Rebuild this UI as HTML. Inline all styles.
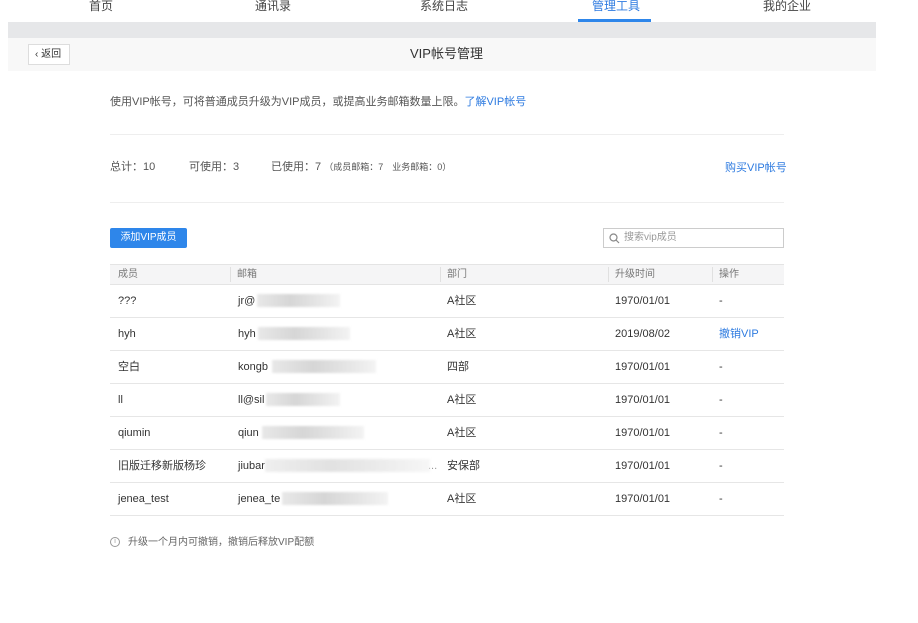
<!DOCTYPE html>
<html><head><meta charset="utf-8"><style>
*{margin:0;padding:0;box-sizing:border-box}
body{width:918px;height:623px;background:#fff;font-family:"Liberation Sans","Noto Sans CJK SC",sans-serif;font-size:11px;line-height:13px;color:#333;position:relative;overflow:hidden}
.a{position:absolute;white-space:nowrap;line-height:13px}
.nav{font-size:12px;color:#444;top:0;line-height:13px}
.blue{color:#2e7be0}
.g{color:#555}
.bl{position:absolute;height:13px;background:linear-gradient(90deg,#e8e8e8,#d6d6d6 40%,#e4e4e4 70%,#f3f3f3);filter:blur(1px)}
.row{position:absolute;left:110px;width:674px;height:33px;border-bottom:1px solid #e6e6e6}
.row span{position:absolute;top:10px;font-size:11px;line-height:13px;height:13px;color:#333;white-space:nowrap}
</style></head><body>
<div class="a nav" style="left:89px">首页</div>
<div class="a nav" style="left:255px">通讯录</div>
<div class="a nav" style="left:420px">系统日志</div>
<div class="a nav blue" style="left:592px">管理工具</div>
<div class="a nav" style="left:763px">我的企业</div>
<div class="a" style="left:578px;top:19px;width:73px;height:3px;background:#2e86ea"></div>
<div class="a" style="left:8px;top:22px;width:868px;height:16px;background:#e6e7e9"></div>
<div class="a" style="left:8px;top:38px;width:868px;height:33px;background:#f8f8f8"></div>
<div class="a" style="left:28px;top:44px;width:42px;height:21px;background:#fff;border:1px solid #ddd;font-size:10px;line-height:19px;padding-left:6px">‹ 返回</div>
<div class="a" style="left:410px;top:46px;font-size:13px;line-height:15px;color:#333">VIP帐号管理</div>
<div class="a g" style="left:110px;top:96px">使用VIP帐号，可将普通成员升级为VIP成员，或提高业务邮箱数量上限。<span class="blue">了解VIP帐号</span></div>
<div class="a" style="left:110px;top:134px;width:674px;height:1px;background:#eee"></div>
<div class="a g" style="left:110px;top:161px">总计：10</div>
<div class="a g" style="left:189px;top:161px">可使用：3</div>
<div class="a g" style="left:271px;top:161px">已使用：7 <span style="font-size:9px">（成员邮箱：7　业务邮箱：0）</span></div>
<div class="a blue" style="left:725px;top:162px">购买VIP帐号</div>
<div class="a" style="left:110px;top:202px;width:674px;height:1px;background:#eee"></div>
<div class="a" style="left:110px;top:228px;width:77px;height:20px;background:#2e86ea;color:#fff;font-size:10px;line-height:20px;text-align:center;border-radius:2px">添加VIP成员</div>
<div class="a" style="left:603px;top:228px;width:181px;height:20px;border:1px solid #ccc;color:#999;font-size:10px;line-height:18px;padding-left:20px">搜索vip成员
<svg style="position:absolute;left:5px;top:4px" width="11" height="11" viewBox="0 0 11 11"><circle cx="4.5" cy="4.5" r="3.5" fill="none" stroke="#888" stroke-width="1.2"/><path d="M7 7l3 3" stroke="#888" stroke-width="1.2"/></svg></div>
<div class="a" style="left:110px;top:264px;width:674px;height:21px;background:#f5f5f6;border-top:1px solid #e4e4e4;border-bottom:1px solid #e4e4e4;color:#777;font-size:10px">
<span class="a" style="left:8px;top:3px">成员</span>
<span class="a" style="left:120px;top:2px;height:15px;border-left:1px solid #e0e0e0"></span><span class="a" style="left:127px;top:3px">邮箱</span>
<span class="a" style="left:330px;top:2px;height:15px;border-left:1px solid #e0e0e0"></span><span class="a" style="left:337px;top:3px">部门</span>
<span class="a" style="left:498px;top:2px;height:15px;border-left:1px solid #e0e0e0"></span><span class="a" style="left:505px;top:3px">升级时间</span>
<span class="a" style="left:602px;top:2px;height:15px;border-left:1px solid #e0e0e0"></span><span class="a" style="left:609px;top:3px">操作</span>
</div>
<div class="row" style="top:285px"><span style="left:8px">???</span><span style="left:128px">jr@</span><span style="left:337px">A社区</span><span style="left:505px">1970/01/01</span><span style="left:609px">-</span></div>
<div class="row" style="top:318px"><span style="left:8px">hyh</span><span style="left:128px">hyh</span><span style="left:337px">A社区</span><span style="left:505px">2019/08/02</span><span style="left:609px;color:#2e7be0">撤销VIP</span></div>
<div class="row" style="top:351px"><span style="left:8px">空白</span><span style="left:128px">kongb</span><span style="left:337px">四部</span><span style="left:505px">1970/01/01</span><span style="left:609px">-</span></div>
<div class="row" style="top:384px"><span style="left:8px">ll</span><span style="left:128px">ll@sil</span><span style="left:337px">A社区</span><span style="left:505px">1970/01/01</span><span style="left:609px">-</span></div>
<div class="row" style="top:417px"><span style="left:8px">qiumin</span><span style="left:128px">qiun</span><span style="left:337px">A社区</span><span style="left:505px">1970/01/01</span><span style="left:609px">-</span></div>
<div class="row" style="top:450px"><span style="left:8px">旧版迁移新版杨珍</span><span style="left:128px">jiubar</span><span style="left:318px;color:#999">...</span><span style="left:337px">安保部</span><span style="left:505px">1970/01/01</span><span style="left:609px">-</span></div>
<div class="row" style="top:483px"><span style="left:8px">jenea_test</span><span style="left:128px">jenea_te</span><span style="left:337px">A社区</span><span style="left:505px">1970/01/01</span><span style="left:609px">-</span></div>
<div class="bl" style="left:257px;top:294px;width:83px"></div>
<div class="bl" style="left:258px;top:327px;width:92px"></div>
<div class="bl" style="left:272px;top:360px;width:104px"></div>
<div class="bl" style="left:266px;top:393px;width:74px"></div>
<div class="bl" style="left:262px;top:426px;width:102px"></div>
<div class="bl" style="left:265px;top:459px;width:165px;opacity:.7"></div>
<div class="bl" style="left:282px;top:492px;width:106px"></div>
<div class="a" style="left:110px;top:537px;width:10px;height:10px;border:1px solid #999;border-radius:50%;font-size:7px;line-height:8px;text-align:center;color:#999">i</div>
<div class="a" style="left:128px;top:536px;font-size:10px;color:#666">升级一个月内可撤销，撤销后释放VIP配额</div>
</body></html>
